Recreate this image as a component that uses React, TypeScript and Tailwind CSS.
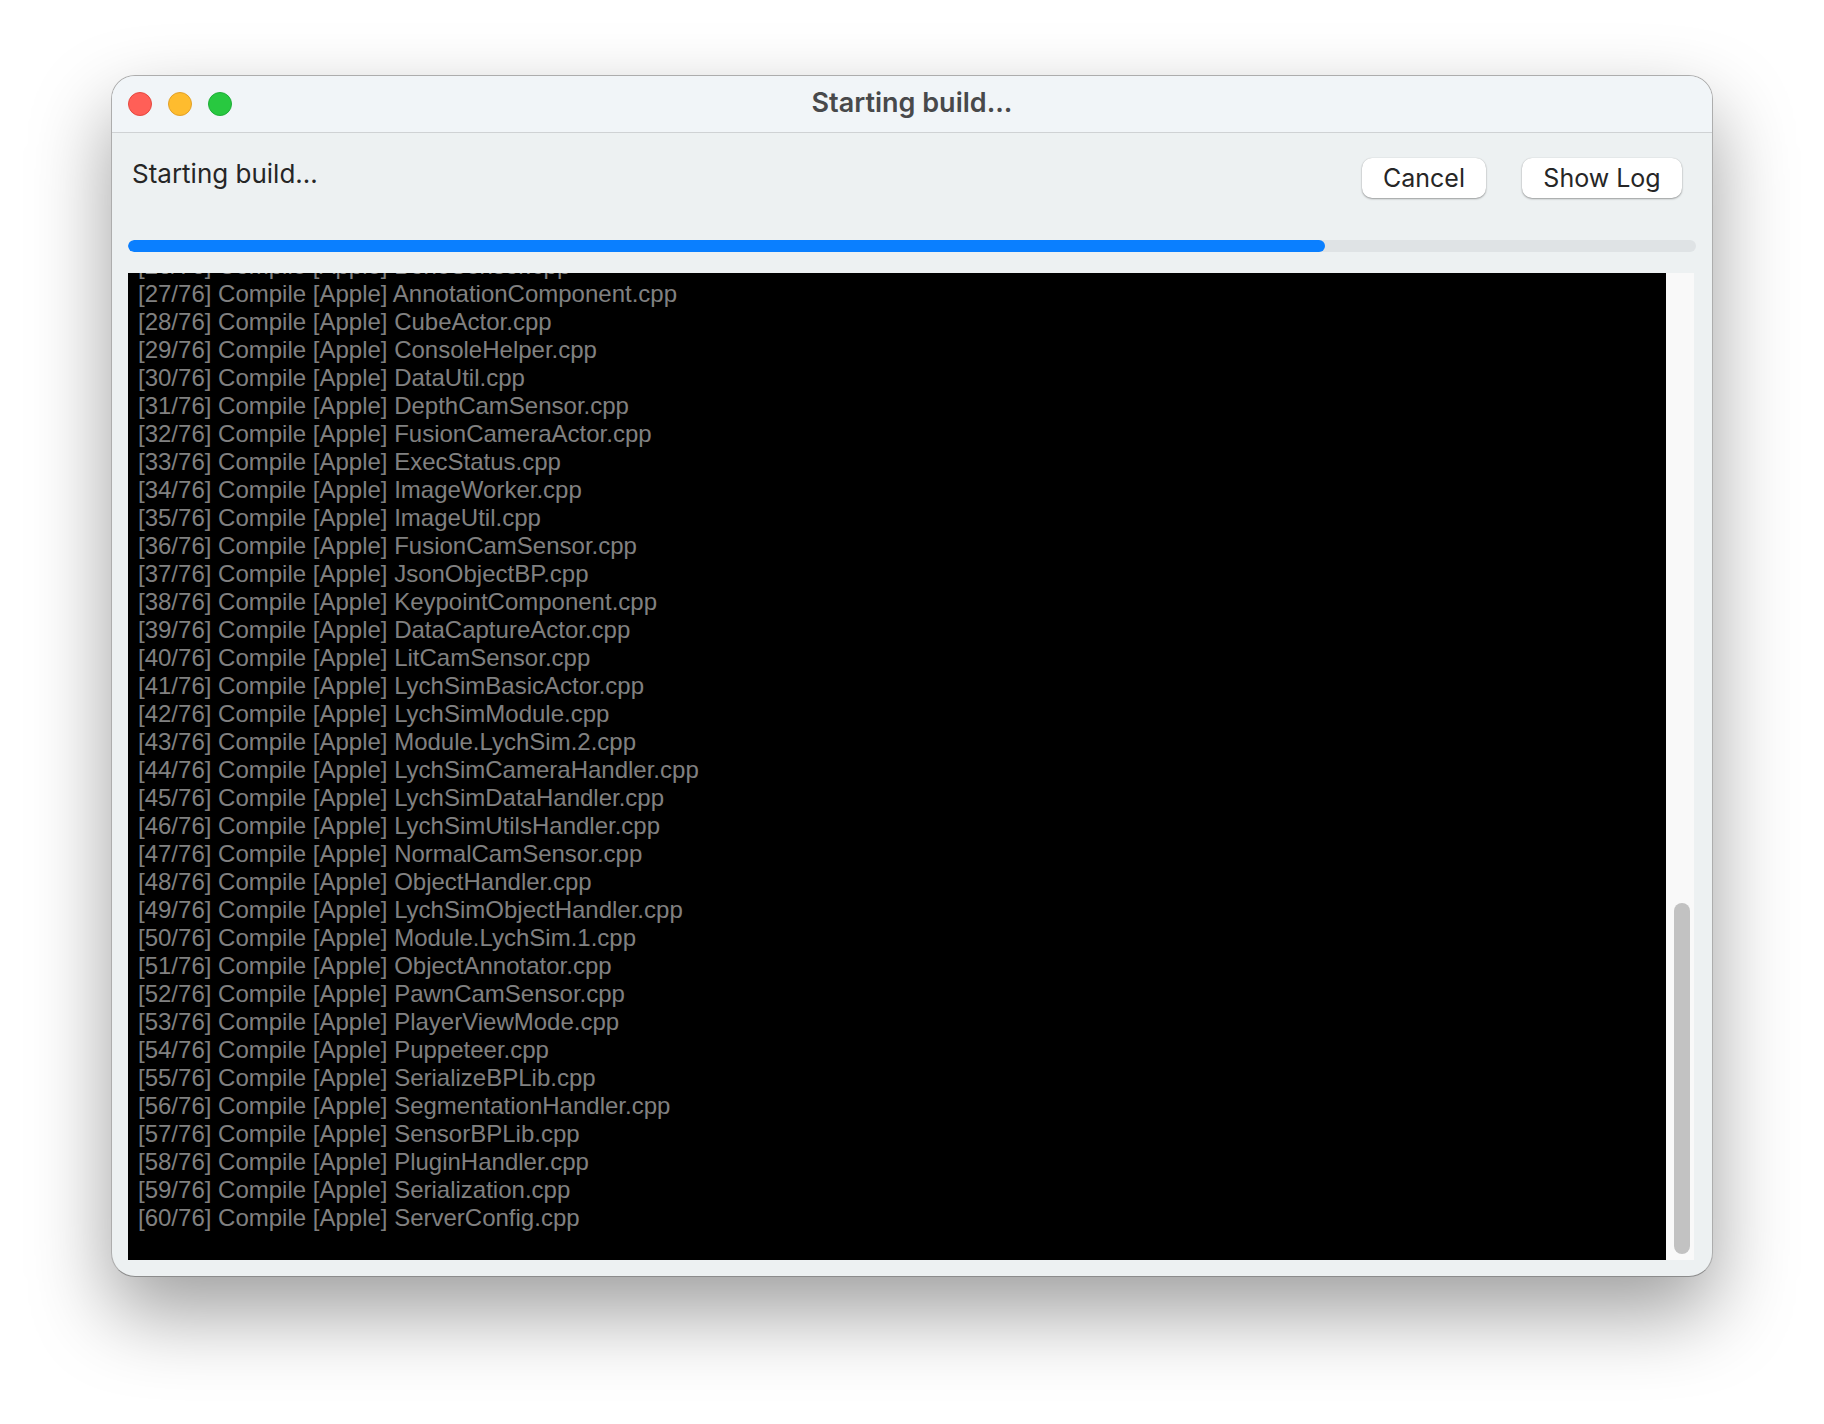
import React from 'react';

const logLines = [
  '[26/76] Compile [Apple] BoneSensor.cpp',
  '[27/76] Compile [Apple] AnnotationComponent.cpp',
  '[28/76] Compile [Apple] CubeActor.cpp',
  '[29/76] Compile [Apple] ConsoleHelper.cpp',
  '[30/76] Compile [Apple] DataUtil.cpp',
  '[31/76] Compile [Apple] DepthCamSensor.cpp',
  '[32/76] Compile [Apple] FusionCameraActor.cpp',
  '[33/76] Compile [Apple] ExecStatus.cpp',
  '[34/76] Compile [Apple] ImageWorker.cpp',
  '[35/76] Compile [Apple] ImageUtil.cpp',
  '[36/76] Compile [Apple] FusionCamSensor.cpp',
  '[37/76] Compile [Apple] JsonObjectBP.cpp',
  '[38/76] Compile [Apple] KeypointComponent.cpp',
  '[39/76] Compile [Apple] DataCaptureActor.cpp',
  '[40/76] Compile [Apple] LitCamSensor.cpp',
  '[41/76] Compile [Apple] LychSimBasicActor.cpp',
  '[42/76] Compile [Apple] LychSimModule.cpp',
  '[43/76] Compile [Apple] Module.LychSim.2.cpp',
  '[44/76] Compile [Apple] LychSimCameraHandler.cpp',
  '[45/76] Compile [Apple] LychSimDataHandler.cpp',
  '[46/76] Compile [Apple] LychSimUtilsHandler.cpp',
  '[47/76] Compile [Apple] NormalCamSensor.cpp',
  '[48/76] Compile [Apple] ObjectHandler.cpp',
  '[49/76] Compile [Apple] LychSimObjectHandler.cpp',
  '[50/76] Compile [Apple] Module.LychSim.1.cpp',
  '[51/76] Compile [Apple] ObjectAnnotator.cpp',
  '[52/76] Compile [Apple] PawnCamSensor.cpp',
  '[53/76] Compile [Apple] PlayerViewMode.cpp',
  '[54/76] Compile [Apple] Puppeteer.cpp',
  '[55/76] Compile [Apple] SerializeBPLib.cpp',
  '[56/76] Compile [Apple] SegmentationHandler.cpp',
  '[57/76] Compile [Apple] SensorBPLib.cpp',
  '[58/76] Compile [Apple] PluginHandler.cpp',
  '[59/76] Compile [Apple] Serialization.cpp',
  '[60/76] Compile [Apple] ServerConfig.cpp',
];

const TrafficLight = ({ className }: { className: string }) => (
  <div className={`h-6 w-6 rounded-full border ${className}`} />
);

const DialogButton = ({ label, className }: { label: string; className: string }) => (
  <button className={`h-10 rounded-[10px] bg-white text-[25px] leading-[35px] text-[#262626] shadow-[0_1px_2px_rgba(0,0,0,0.35),0_0_1px_rgba(0,0,0,0.2)] ${className}`}>
    {label}
  </button>
);

const App = () => {
  return (
    <div className="h-[1424px] w-[1824px] overflow-hidden bg-white pl-[111px] pt-[75px] font-['Inter',sans-serif]">
      <div className="flex h-[1202px] w-[1602px] flex-col overflow-hidden rounded-[24px] border border-[#adadad] border-b-[#8c8c8c] bg-[#edf1f2] shadow-[0_36px_80px_rgba(0,0,0,0.38)]">
        {/* Title bar */}
        <div className="relative flex h-[57px] shrink-0 items-center border-b border-[#cfd2d4] bg-[#f1f5f8] pl-[16px]">
          <div className="flex gap-4">
            <TrafficLight className="border-[#e5483f] bg-[#ff5f57]" />
            <TrafficLight className="border-[#e2a028] bg-[#febc2e]" />
            <TrafficLight className="border-[#1fad38] bg-[#28c840]" />
          </div>
          <div className="absolute inset-x-0 top-0 text-center text-[27px] font-semibold leading-[53px] text-[#48494b]">
            Starting build...
          </div>
        </div>

        {/* Status row */}
        <div className="flex h-[107px] shrink-0 items-start justify-between pl-[20px] pr-[30px] pt-[25px]">
          <div className="text-[26px] leading-[32px] text-[#262626]">Starting build...</div>
          <div className="flex gap-9">
            <DialogButton label="Cancel" className="w-[124px]" />
            <DialogButton label="Show Log" className="w-[160px]" />
          </div>
        </div>

        {/* Progress */}
        <div className="mx-[16px] h-3 shrink-0 overflow-hidden rounded-full bg-[#dfe3e5]">
          <div className="h-full w-[1197px] rounded-full bg-[#0a7fff]" />
        </div>

        {/* Log */}
        <div className="ml-[16px] mt-[21px] flex h-[987px] w-[1566px] shrink-0">
          <div className="flex w-[1538px] flex-col justify-end overflow-hidden bg-black pb-[28px] pl-[10px] font-['Liberation_Sans',sans-serif] text-[24px] leading-[28px] text-[#808080]">
            {logLines.map((line) => (
              <div key={line} className="shrink-0 whitespace-nowrap">{line}</div>
            ))}
          </div>
          <div className="flex w-7 flex-col justify-end bg-[#f9f9f9] pb-[6px] pl-2">
            <div className="h-[351px] w-4 rounded-full bg-[#c2c2c2]" />
          </div>
        </div>
      </div>
    </div>
  );
};

export default App;
